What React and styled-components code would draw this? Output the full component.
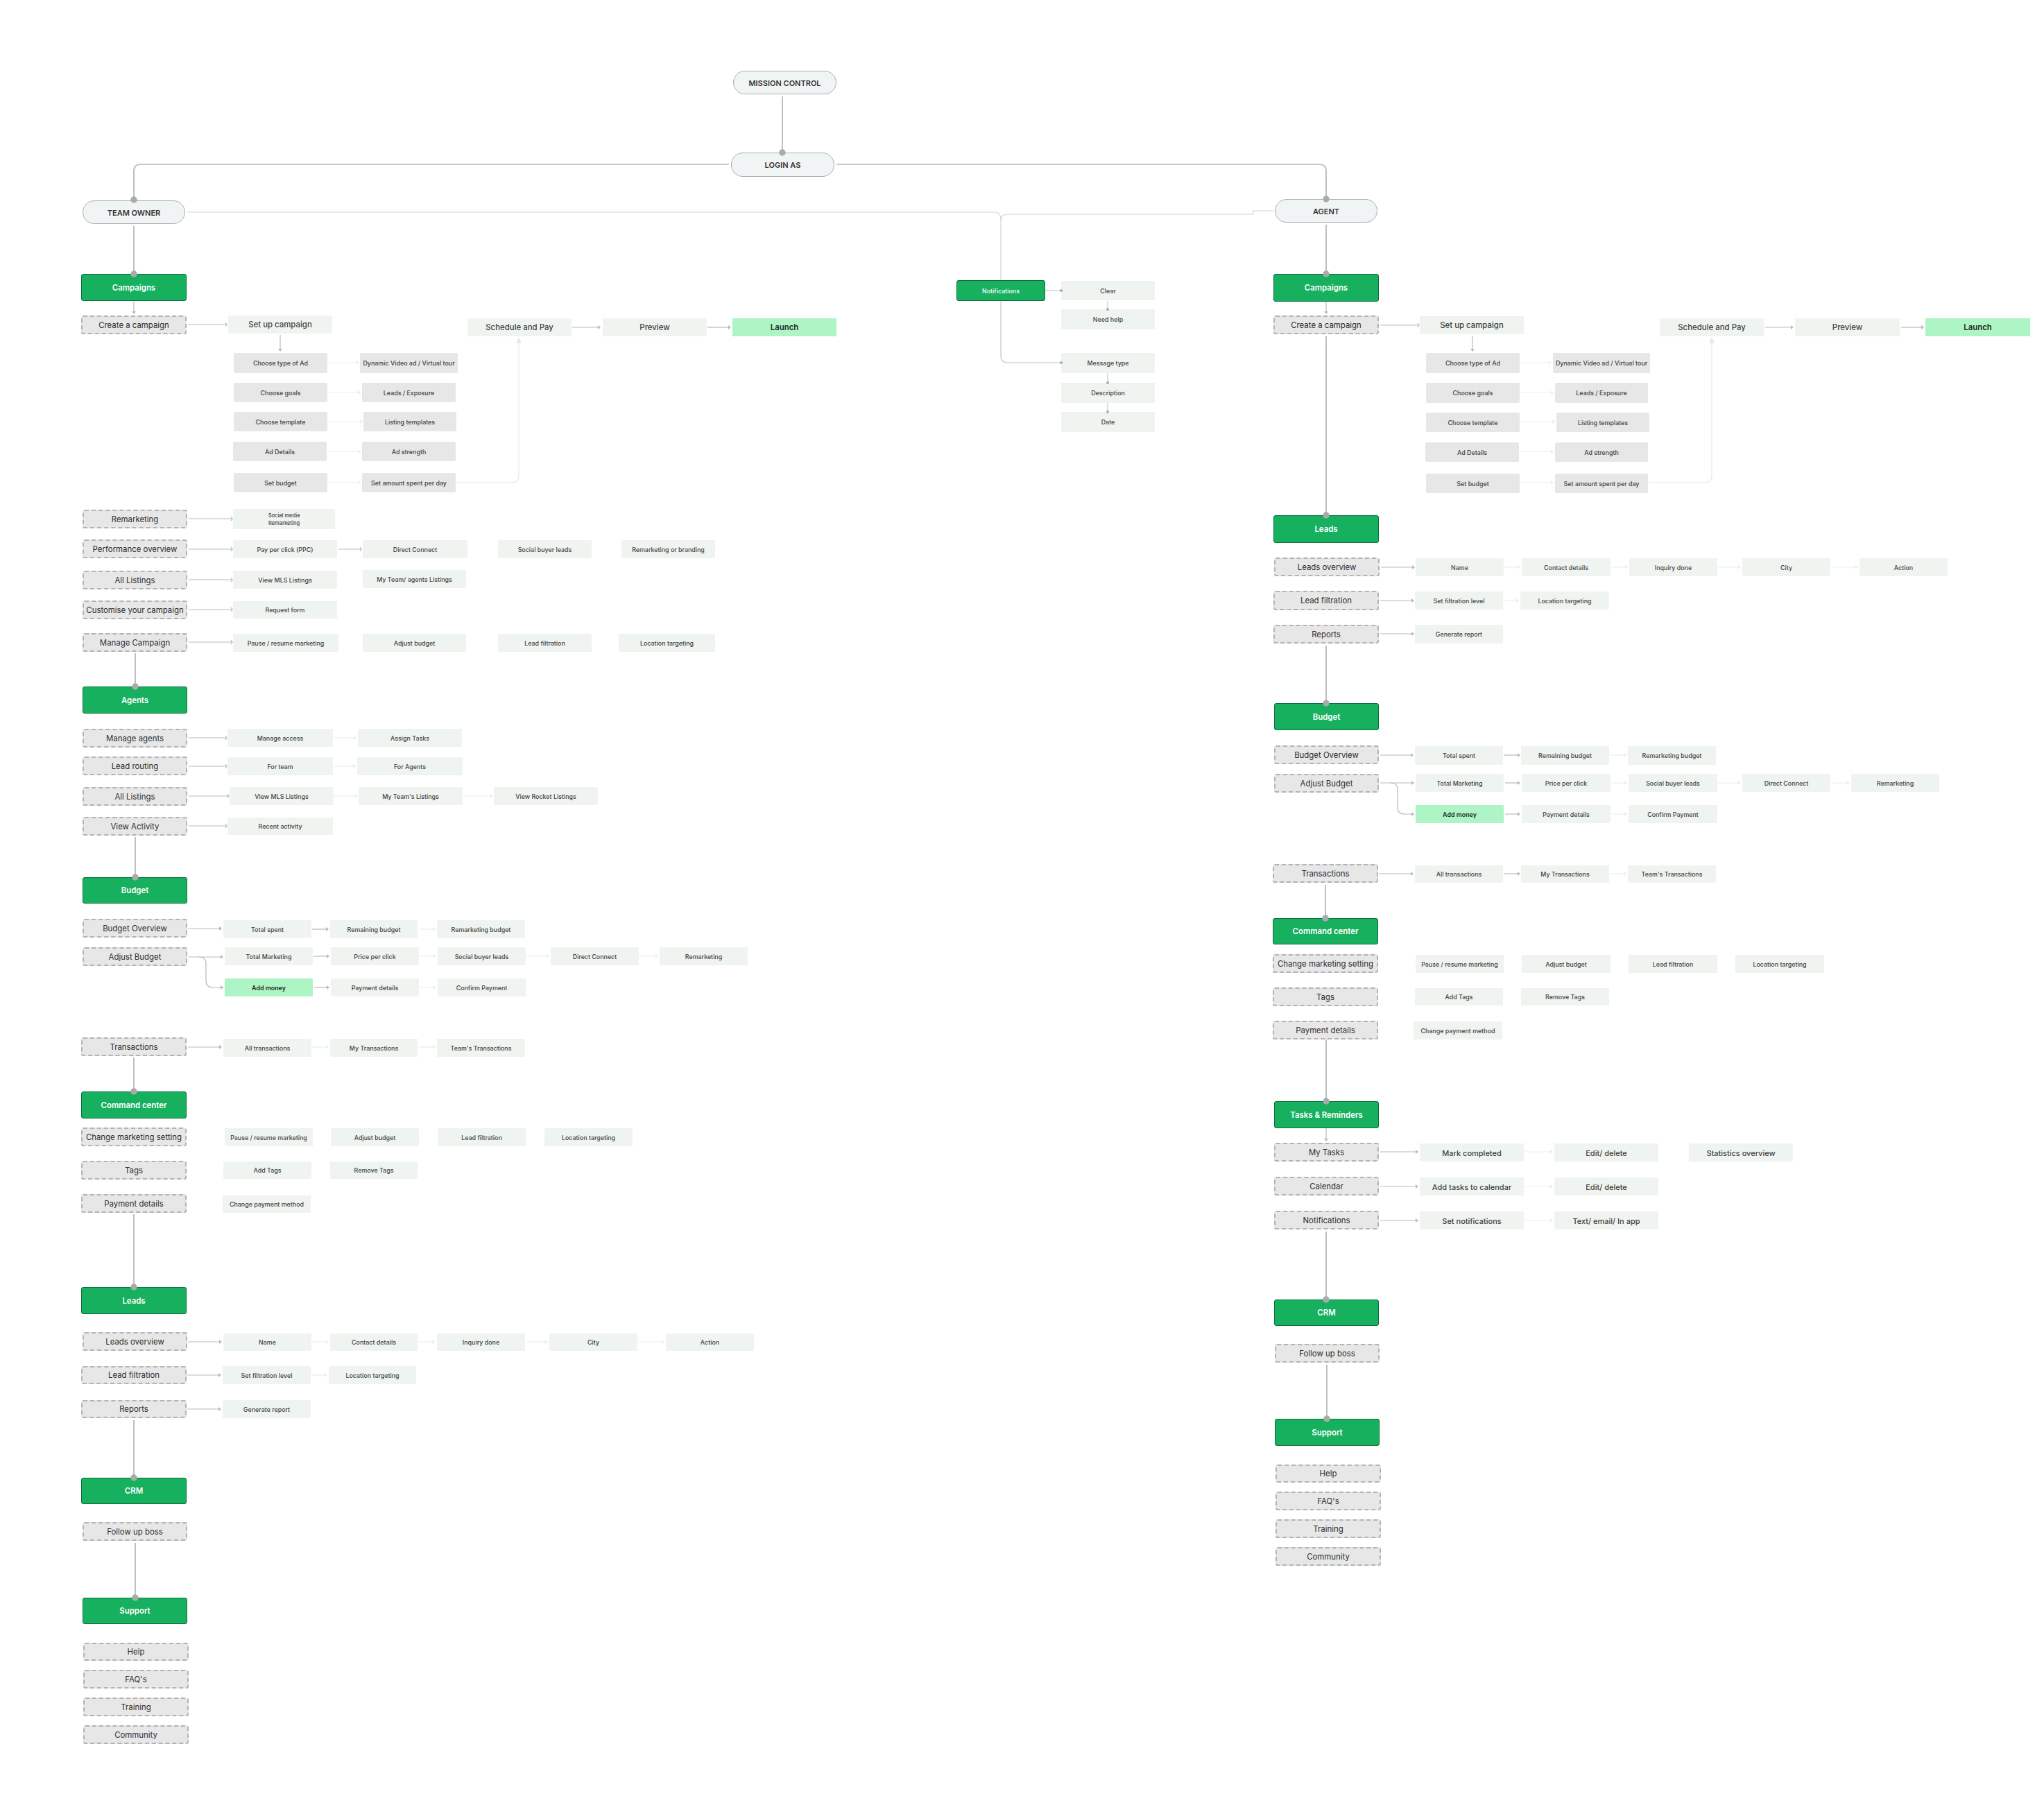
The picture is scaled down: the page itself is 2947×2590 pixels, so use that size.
import styled, { createGlobalStyle } from "styled-components";

const GlobalStyle = createGlobalStyle`
  html, body {
    margin: 0;
    padding: 0;
    background: #fff;
    font-family: "Inter", "Liberation Sans", sans-serif;
  }
`;

const Canvas = styled.div`
  position: relative;
  width: 2947px;
  height: 2590px;
  background: #fff;
  overflow: hidden;
`;

const Wires = styled.svg`
  position: absolute;
  top: 0;
  left: 0;
  z-index: 2;
  pointer-events: none;
`;

const Node = styled.div.attrs((p) => ({
  style: { left: p.$x1, top: p.$y1, width: p.$x2 - p.$x1, height: p.$y2 - p.$y1 },
}))`
  position: absolute;
  z-index: 1;
  box-sizing: border-box;
  display: flex;
  align-items: center;
  justify-content: center;
  padding-top: ${(p) => (p.$size > 10 ? 2 : 1)}px;
  text-align: center;
  white-space: nowrap;
  color: #3f4241;
  font-size: ${(p) => p.$size || 8.9}px;
  font-weight: 500;
  line-height: 1.5;
`;

const Pill = styled(Node)`
  padding-top: 2px;
  background: #f1f4f4;
  border: 1.5px solid #abaeae;
  border-radius: 17px;
  color: #333;
  font-size: 11px;
  font-weight: 600;
`;

const Group = styled(Node)`
  padding-top: 2px;
  background: #17b05f;
  border: 1.5px solid #0d6f3c;
  border-radius: 3px;
  color: #fff;
  font-size: ${(p) => p.$size || 11.4}px;
  font-weight: ${(p) => (p.$size ? 500 : 600)};
`;

const Dashed = styled(Node)`
  padding-top: 2px;
  background: #e7e7e7;
  border: 2px dashed #b3b3b3;
  border-radius: 3px;
  color: #2e2e2e;
  font-size: 11.4px;
  font-weight: 400;
`;

const Soft = styled(Node)`
  background: #eff4f1;
  border-radius: 1px;
`;

const Grey = styled(Node)`
  background: #e7e7e7;
  border-radius: 2px;
`;

const Mint = styled(Node)`
  background: #adf5c5;
  border-radius: 1px;
  color: #1e2a22;
  font-weight: 600;
`;

const KINDS = { pill: Pill, group: Group, dashed: Dashed, soft: Soft, grey: Grey, mint: Mint };

// row(kind, top, bottom, cells, size) - cells are [left, right, label]
const row = (kind, y1, y2, cells, size) =>
  cells.map(([x1, x2, text]) => ({ kind, y1, y2, x1, x2, text, size }));

const nodes = [
  ...row("pill", 102, 136, [[1057, 1206, "MISSION CONTROL"]]),
  ...row("pill", 220, 255, [[1054, 1203, "LOGIN AS"]]),
  ...row("pill", 289, 323, [[119, 267, "TEAM OWNER"]]),
  ...row("pill", 287, 321, [[1838, 1986, "AGENT"]]),

  // team owner - campaigns
  ...row("group", 395, 434, [[117, 269, "Campaigns"]]),
  ...row("dashed", 455, 482, [[117, 269, "Create a campaign"]]),
  ...row("soft", 455, 481, [[329, 479, "Set up campaign"]], 11.4),
  ...row("soft", 459, 485, [[674, 824, "Schedule and Pay"], [869, 1019, "Preview"]], 11.4),
  ...row("mint", 459, 485, [[1056, 1206, "Launch"]], 11.4),
  ...row("grey", 509, 538, [[337, 472, "Choose type of Ad"], [519, 660, "Dynamic Video ad / Virtual tour"]]),
  ...row("grey", 552, 580, [[337, 472, "Choose goals"], [522, 657, "Leads / Exposure"]]),
  ...row("grey", 594, 622, [[337, 472, "Choose template"], [524, 658, "Listing templates"]]),
  ...row("grey", 637, 665, [[336, 471, "Ad Details"], [522, 657, "Ad strength"]]),
  ...row("grey", 682, 710, [[337, 472, "Set budget"], [522, 657, "Set amount spent per day"]]),
  ...row("dashed", 735, 762, [[119, 270, "Remarketing"]]),
  ...row("soft", 734, 763, [[336, 483, "Social media\nRemarketing"]], 7.5),
  ...row("dashed", 778, 805, [[119, 270, "Performance overview"]]),
  ...row("soft", 779, 805, [[336, 486, "Pay per click (PPC)"], [523, 674, "Direct Connect"], [718, 853, "Social buyer leads"], [896, 1031, "Remarketing or branding"]]),
  ...row("dashed", 823, 850, [[119, 270, "All Listings"]]),
  ...row("soft", 823, 849, [[336, 486, "View MLS Listings"]]),
  ...row("soft", 822, 848, [[523, 672, "My Team/ agents Listings"]]),
  ...row("dashed", 866, 893, [[119, 270, "Customise your campaign"]]),
  ...row("soft", 867, 892, [[336, 486, "Request form"]]),
  ...row("dashed", 913, 940, [[119, 270, "Manage Campaign"]]),
  ...row("soft", 914, 940, [[336, 488, "Pause / resume marketing"], [523, 672, "Adjust budget"], [718, 853, "Lead filtration"], [892, 1031, "Location targeting"]]),

  // team owner - agents
  ...row("group", 990, 1029, [[119, 270, "Agents"]]),
  ...row("dashed", 1051, 1078, [[119, 270, "Manage agents"]]),
  ...row("soft", 1051, 1077, [[328, 480, "Manage access"], [516, 666, "Assign Tasks"]]),
  ...row("dashed", 1091, 1118, [[119, 270, "Lead routing"]]),
  ...row("soft", 1092, 1118, [[328, 480, "For team"], [515, 667, "For Agents"]]),
  ...row("dashed", 1135, 1162, [[119, 270, "All Listings"]]),
  ...row("soft", 1135, 1161, [[331, 481, "View MLS Listings"], [517, 667, "My Team's  Listings"], [712, 862, "View Rocket Listings"]]),
  ...row("dashed", 1178, 1205, [[119, 270, "View Activity"]]),
  ...row("soft", 1179, 1204, [[328, 480, "Recent activity"]]),

  // team owner - budget
  ...row("group", 1265, 1303, [[119, 270, "Budget"]]),
  ...row("dashed", 1325, 1352, [[119, 270, "Budget Overview"]]),
  ...row("soft", 1327, 1353, [[322, 449, "Total spent"], [476, 602, "Remaining budget"], [630, 757, "Remarketing budget"]]),
  ...row("dashed", 1366, 1393, [[119, 270, "Adjust Budget"]]),
  ...row("soft", 1366, 1392, [[324, 451, "Total Marketing"], [477, 604, "Price per click"], [631, 758, "Social buyer leads"], [794, 921, "Direct Connect"], [951, 1078, "Remarketing"]]),
  ...row("mint", 1411, 1437, [[324, 451, "Add money"]]),
  ...row("soft", 1411, 1437, [[477, 604, "Payment details"], [631, 758, "Confirm Payment"]]),
  ...row("dashed", 1496, 1523, [[117, 269, "Transactions"]]),
  ...row("soft", 1498, 1524, [[322, 449, "All transactions"], [476, 602, "My Transactions"], [630, 757, "Team's Transactions"]]),

  // team owner - command center
  ...row("group", 1574, 1613, [[117, 269, "Command center"]]),
  ...row("dashed", 1626, 1653, [[117, 269, "Change marketing setting"]]),
  ...row("soft", 1627, 1653, [[324, 451, "Pause / resume marketing"], [477, 604, "Adjust budget"], [631, 758, "Lead filtration"], [785, 912, "Location targeting"]]),
  ...row("dashed", 1674, 1701, [[117, 269, "Tags"]]),
  ...row("soft", 1675, 1700, [[322, 449, "Add Tags"], [476, 602, "Remove Tags"]]),
  ...row("dashed", 1722, 1749, [[117, 269, "Payment details"]]),
  ...row("soft", 1724, 1749, [[321, 448, "Change payment method"]]),

  // team owner - leads
  ...row("group", 1856, 1895, [[117, 269, "Leads"]]),
  ...row("dashed", 1921, 1948, [[119, 270, "Leads overview"]]),
  ...row("soft", 1923, 1948, [[322, 449, "Name"], [476, 602, "Contact details"], [630, 757, "Inquiry done"], [792, 919, "City"], [960, 1087, "Action"]]),
  ...row("dashed", 1970, 1996, [[117, 269, "Lead filtration"]]),
  ...row("soft", 1970, 1996, [[321, 448, "Set filtration level"], [474, 600, "Location targeting"]]),
  ...row("dashed", 2019, 2045, [[117, 269, "Reports"]]),
  ...row("soft", 2019, 2045, [[321, 448, "Generate report"]]),
  ...row("group", 2131, 2169, [[117, 269, "CRM"]]),
  ...row("dashed", 2195, 2222, [[119, 270, "Follow up boss"]]),
  ...row("group", 2304, 2342, [[119, 270, "Support"]]),
  ...row("dashed", 2369, 2395, [[120, 272, "Help"]]),
  ...row("dashed", 2408, 2435, [[120, 272, "FAQ's"]]),
  ...row("dashed", 2448, 2475, [[120, 272, "Training"]]),
  ...row("dashed", 2488, 2515, [[120, 272, "Community"]]),

  // notifications
  ...row("group", 404, 434, [[1379, 1507, "Notifications"]], 8.9),
  ...row("soft", 405, 433, [[1530, 1665, "Clear"]]),
  ...row("soft", 446, 475, [[1530, 1665, "Need help"]]),
  ...row("soft", 509, 538, [[1530, 1665, "Message type"]]),
  ...row("soft", 552, 581, [[1530, 1665, "Description"]]),
  ...row("soft", 594, 623, [[1530, 1665, "Date"]]),

  // agent - campaigns
  ...row("group", 395, 435, [[1836, 1988, "Campaigns"]]),
  ...row("dashed", 455, 482, [[1836, 1988, "Create a campaign"]]),
  ...row("soft", 456, 482, [[2047, 2197, "Set up campaign"]], 11.4),
  ...row("soft", 459, 485, [[2393, 2543, "Schedule and Pay"], [2588, 2739, "Preview"]], 11.4),
  ...row("mint", 459, 485, [[2776, 2927, "Launch"]], 11.4),
  ...row("grey", 509, 538, [[2056, 2191, "Choose type of Ad"], [2239, 2379, "Dynamic Video ad / Virtual tour"]]),
  ...row("grey", 552, 581, [[2056, 2191, "Choose goals"], [2242, 2376, "Leads / Exposure"]]),
  ...row("grey", 595, 623, [[2056, 2191, "Choose template"], [2244, 2378, "Listing templates"]]),
  ...row("grey", 638, 666, [[2055, 2190, "Ad Details"], [2242, 2376, "Ad strength"]]),
  ...row("grey", 683, 711, [[2056, 2191, "Set budget"], [2242, 2376, "Set amount spent per day"]]),

  // agent - leads
  ...row("group", 743, 783, [[1836, 1988, "Leads"]]),
  ...row("dashed", 804, 831, [[1837, 1989, "Leads overview"]]),
  ...row("soft", 805, 831, [[2041, 2168, "Name"], [2194, 2322, "Contact details"], [2349, 2476, "Inquiry done"], [2512, 2639, "City"], [2681, 2808, "Action"]]),
  ...row("dashed", 852, 880, [[1836, 1988, "Lead filtration"]]),
  ...row("soft", 853, 879, [[2040, 2167, "Set filtration level"], [2192, 2320, "Location targeting"]]),
  ...row("dashed", 901, 928, [[1836, 1988, "Reports"]]),
  ...row("soft", 901, 928, [[2040, 2167, "Generate report"]]),

  // agent - budget
  ...row("group", 1014, 1053, [[1837, 1988, "Budget"]]),
  ...row("dashed", 1075, 1102, [[1837, 1988, "Budget Overview"]]),
  ...row("soft", 1076, 1103, [[2040, 2167, "Total spent"], [2193, 2320, "Remaining budget"], [2347, 2474, "Remarketing budget"]]),
  ...row("dashed", 1116, 1143, [[1837, 1988, "Adjust Budget"]]),
  ...row("soft", 1116, 1142, [[2041, 2168, "Total Marketing"], [2194, 2322, "Price per click"], [2348, 2476, "Social buyer leads"], [2512, 2639, "Direct Connect"], [2669, 2796, "Remarketing"]]),
  ...row("mint", 1161, 1187, [[2041, 2168, "Add money"]]),
  ...row("soft", 1161, 1187, [[2194, 2322, "Payment details"], [2348, 2476, "Confirm Payment"]]),
  ...row("dashed", 1246, 1273, [[1835, 1987, "Transactions"]]),
  ...row("soft", 1248, 1273, [[2040, 2167, "All transactions"], [2193, 2320, "My Transactions"], [2347, 2474, "Team's Transactions"]]),

  // agent - command center
  ...row("group", 1324, 1362, [[1835, 1987, "Command center"]]),
  ...row("dashed", 1376, 1403, [[1835, 1987, "Change marketing setting"]]),
  ...row("soft", 1377, 1403, [[2041, 2168, "Pause / resume marketing"], [2194, 2322, "Adjust budget"], [2348, 2476, "Lead filtration"], [2502, 2630, "Location targeting"]]),
  ...row("dashed", 1424, 1451, [[1835, 1987, "Tags"]]),
  ...row("soft", 1425, 1450, [[2040, 2167, "Add Tags"], [2193, 2320, "Remove Tags"]]),
  ...row("dashed", 1472, 1499, [[1835, 1987, "Payment details"]]),
  ...row("soft", 1473, 1499, [[2038, 2166, "Change payment method"]]),

  // agent - tasks
  ...row("group", 1588, 1627, [[1837, 1988, "Tasks & Reminders"]]),
  ...row("dashed", 1648, 1675, [[1837, 1988, "My Tasks"]]),
  ...row("soft", 1649, 1675, [[2047, 2197, "Mark completed"], [2241, 2391, "Edit/ delete"], [2435, 2585, "Statistics overview"]], 11),
  ...row("dashed", 1697, 1724, [[1837, 1988, "Calendar"]]),
  ...row("soft", 1698, 1724, [[2047, 2197, "Add tasks to calendar"], [2241, 2391, "Edit/ delete"]], 11),
  ...row("dashed", 1746, 1773, [[1837, 1988, "Notifications"]]),
  ...row("soft", 1747, 1773, [[2047, 2197, "Set notifications"], [2241, 2391, "Text/ email/ In app"]], 11),
  ...row("group", 1874, 1912, [[1837, 1988, "CRM"]]),
  ...row("dashed", 1938, 1965, [[1838, 1989, "Follow up boss"]]),
  ...row("group", 2046, 2085, [[1838, 1989, "Support"]]),
  ...row("dashed", 2112, 2138, [[1839, 1991, "Help"]]),
  ...row("dashed", 2151, 2178, [[1839, 1991, "FAQ's"]]),
  ...row("dashed", 2191, 2218, [[1839, 1991, "Training"]]),
  ...row("dashed", 2231, 2258, [[1839, 1991, "Community"]]),
];

const MID = "#b9b9b9";
const FAINT = "#e8efec";
const TRUNK = "#b4b6b6";
const DOT = "#a9abab";

// trunk lines between sections, ending in a dot on the next box
const trunks = [
  [1128, 139, 220],
  [193, 326, 395],
  [195, 942, 990],
  [195, 1207, 1265],
  [193, 1525, 1574],
  [193, 1751, 1856],
  [193, 2048, 2131],
  [195, 2225, 2304],
  [1912, 324, 395],
  [1912, 485, 743],
  [1912, 931, 1014],
  [1911, 1276, 1324],
  [1912, 1499, 1588],
  [1912, 1776, 1874],
  [1913, 1968, 2046],
];

// chevron-headed arrows out of the campaign and agent rows: [y, from, to]
const openArrows = [
  [468, 271, 327], [748, 272, 335], [792, 272, 335], [836, 272, 335], [879, 272, 335],
  [926, 272, 335], [792, 488, 521], [1064, 272, 327], [1105, 272, 327], [1148, 272, 330],
  [1191, 272, 327], [469, 1990, 2046],
];

// filled arrows: [y, from, to]
const midArrows = [
  [472, 825, 866], [472, 1020, 1054], [1339, 271, 320], [1340, 450, 474], [1380, 271, 322],
  [1379, 452, 475], [1424, 452, 475], [1510, 271, 320], [1935, 271, 320], [1983, 270, 319],
  [2032, 270, 319], [472, 2545, 2586], [472, 2741, 2774], [818, 1991, 2040], [866, 1990, 2039],
  [914, 1990, 2039], [1089, 1990, 2038], [1089, 2168, 2192], [1129, 1990, 2039], [1129, 2170, 2192],
  [1174, 2170, 2192], [1260, 1988, 2038], [1260, 2168, 2192], [1661, 1990, 2045], [1711, 1990, 2045],
  [1760, 1990, 2045],
];

const faintArrows = [
  [523, 473, 518], [566, 473, 521], [608, 473, 523], [651, 472, 521], [696, 473, 521],
  [1064, 481, 514], [1105, 481, 513], [1148, 482, 516], [1148, 669, 711], [1340, 604, 628],
  [1379, 605, 629], [1379, 759, 792], [1379, 922, 949], [1424, 605, 629], [1510, 450, 474],
  [1510, 604, 628], [1935, 450, 474], [1935, 603, 627], [1935, 758, 790], [1935, 920, 958],
  [1983, 449, 472], [523, 2192, 2237], [566, 2192, 2240], [608, 2192, 2242], [651, 2191, 2240],
  [696, 2192, 2240], [818, 2170, 2192], [818, 2323, 2347], [818, 2477, 2510], [818, 2640, 2679],
  [866, 2168, 2190], [1089, 2321, 2345], [1129, 2323, 2346], [1129, 2477, 2510], [1129, 2640, 2667],
  [1174, 2323, 2346], [1260, 2321, 2345], [1661, 2198, 2239], [1711, 2198, 2239], [1760, 2198, 2239],
];

// vertical arrows: [x, from, to]
const downArrows = [
  [193, 434, 453], [404, 483, 507], [1912, 435, 453], [2123, 484, 507], [1912, 1627, 1646],
];

function Trunk({ x, from, to }) {
  return (
    <g>
      <line x1={x} y1={from} x2={x} y2={to} stroke={TRUNK} strokeWidth="1.7" />
      <circle cx={x} cy={to} r="4.7" fill={DOT} />
    </g>
  );
}

function Arrow({ y, from, to, color }) {
  return (
    <g>
      <line x1={from} y1={y} x2={to - 3} y2={y} stroke={color} strokeWidth="1.2" />
      <path d={`M${to - 4} ${y - 3}L${to} ${y}L${to - 4} ${y + 3}Z`} fill={color} />
    </g>
  );
}

function OpenArrow({ y, from, to }) {
  return (
    <path
      d={`M${from} ${y}H${to}M${to - 2} ${y - 3}L${to} ${y}L${to - 2} ${y + 3}`}
      stroke={MID}
      strokeWidth="1.2"
    />
  );
}

function Connectors() {
  return (
    <Wires width="2947" height="2590" fill="none">
      {/* login branches */}
      <path d="M1051 237H203Q193 237 193 247V289" stroke={TRUNK} strokeWidth="1.7" />
      <path d="M1206 237H1902Q1912 237 1912 247V287" stroke={TRUNK} strokeWidth="1.7" />
      <circle cx="193" cy="288" r="4.7" fill={DOT} />
      <circle cx="1912" cy="287" r="4.7" fill={DOT} />

      {/* notifications */}
      <path d="M270 306H1433Q1443 306 1443 316V404" stroke="#d2d4d4" strokeWidth="1.2" />
      <path d="M1837 304H1807V309H1453Q1443 309 1443 319" stroke="#d2d4d4" strokeWidth="1.2" />
      <path d="M1443 434V513Q1443 523 1453 523H1530" stroke="#c4c6c6" strokeWidth="1.2" />
      <path d="M1507 419H1530" stroke="#c4c6c6" strokeWidth="1.2" />
      <path d="M1597 434V446M1597 538V552M1597 581V594" stroke="#c4c6c6" strokeWidth="1.2" />
      <circle cx="1530" cy="419" r="2" fill="#aaa" />
      <circle cx="1530" cy="523" r="2" fill="#aaa" />
      <circle cx="1597" cy="446" r="2" fill="#aaa" />
      <circle cx="1597" cy="552" r="2" fill="#aaa" />
      <circle cx="1597" cy="594" r="2" fill="#aaa" />

      {/* budget step to schedule and pay */}
      <path d="M658 696H738Q748 696 748 686V492" stroke="#e6e8e8" strokeWidth="1.2" />
      <path d="M744 495L748 486L752 495Z" fill="#e6e8e8" />
      <path d="M2378 696H2458Q2468 696 2468 686V492" stroke="#e6e8e8" strokeWidth="1.2" />
      <path d="M2464 495L2468 486L2472 495Z" fill="#e6e8e8" />

      {/* add money branches */}
      <path d="M287 1380Q297 1380 297 1390V1414Q297 1424 307 1424H322" stroke={MID} strokeWidth="1.2" />
      <path d="M318 1421L322 1424L318 1427Z" fill={MID} />
      <path d="M2005 1129Q2015 1129 2015 1139V1164Q2015 1174 2025 1174H2039" stroke={MID} strokeWidth="1.2" />
      <path d="M2035 1171L2039 1174L2035 1177Z" fill={MID} />

      {trunks.map(([x, from, to]) => (
        <Trunk key={`${x}-${from}`} x={x} from={from} to={to} />
      ))}
      {openArrows.map(([y, from, to]) => (
        <OpenArrow key={`o${y}-${from}`} y={y} from={from} to={to} />
      ))}
      {midArrows.map(([y, from, to]) => (
        <Arrow key={`m${y}-${from}`} y={y} from={from} to={to} color={MID} />
      ))}
      {faintArrows.map(([y, from, to]) => (
        <Arrow key={`f${y}-${from}`} y={y} from={from} to={to} color={FAINT} />
      ))}
      {downArrows.map(([x, from, to]) => (
        <g key={`d${x}-${from}`}>
          <line x1={x} y1={from} x2={x} y2={to - 3} stroke={MID} strokeWidth="1.2" />
          <path d={`M${x - 3} ${to - 4}L${x} ${to}L${x + 3} ${to - 4}Z`} fill={MID} />
        </g>
      ))}
    </Wires>
  );
}

const Stacked = styled.span`
  white-space: pre-line;
`;

export default function App() {
  return (
    <Canvas>
      <GlobalStyle />
      {nodes.map((n) => {
        const Box = KINDS[n.kind];
        return (
          <Box key={`${n.x1}-${n.y1}`} $x1={n.x1} $x2={n.x2} $y1={n.y1} $y2={n.y2} $size={n.size}>
            <Stacked>{n.text}</Stacked>
          </Box>
        );
      })}
      <Connectors />
    </Canvas>
  );
}
